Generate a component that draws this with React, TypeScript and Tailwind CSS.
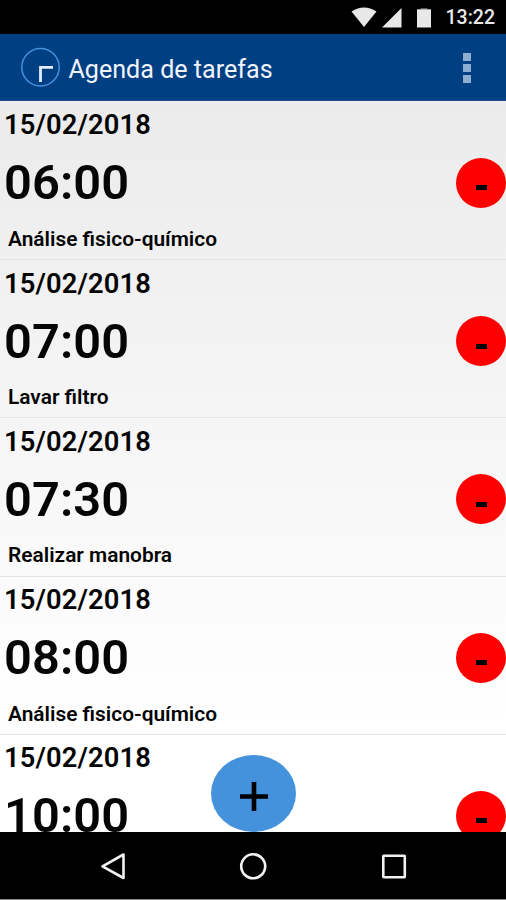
type Task = {
  date: string;
  time: string;
  title?: string;
};

const TASKS: Task[] = [
  { date: "15/02/2018", time: "06:00", title: "Análise fisico-químico" },
  { date: "15/02/2018", time: "07:00", title: "Lavar filtro" },
  { date: "15/02/2018", time: "07:30", title: "Realizar manobra" },
  { date: "15/02/2018", time: "08:00", title: "Análise fisico-químico" },
  { date: "15/02/2018", time: "10:00" },
];

function StatusBar() {
  return (
    <div className="flex h-[34px] shrink-0 items-center justify-end bg-black pr-[11px] text-[#e8e8e8]">
      <svg width="26" height="20" viewBox="0 0 26 20" fill="currentColor" aria-hidden>
        <path d="M0.5 4.5 Q13 -3.5 25.5 4.5 L13 20 Z" />
      </svg>
      <svg className="ml-[5px] mt-px" width="20" height="20" viewBox="0 0 20 20" fill="currentColor" aria-hidden>
        <path d="M0 19.5 L19.5 0 V19.5 Z" />
      </svg>
      <svg className="ml-[15px] mt-[2px]" width="14" height="20" viewBox="0 0 14 20" fill="currentColor" aria-hidden>
        <path d="M3.5 0 H10.5 V1.5 H3.5 Z" opacity="0.4" />
        <path d="M0 1.3 H14 V19.5 H0 Z" />
      </svg>
      <span className="ml-[15px] mt-[2px] text-[19.5px] font-medium leading-none">13:22</span>
    </div>
  );
}

function AppBar() {
  return (
    <header className="flex h-[67px] shrink-0 items-center border-b border-[#244a91] bg-[#003f82] pl-[21px] pr-[35px]">
      <svg width="40" height="40" viewBox="0 0 40 40" fill="none" aria-hidden>
        <circle cx="19.5" cy="20.3" r="18.7" stroke="#4590dc" strokeWidth="1.5" />
        <path d="M19.5 35 V20.3 H32" stroke="#e6edfa" strokeWidth="2.8" />
      </svg>
      <h1 className="ml-[7.5px] mt-[5px] text-[25.1px] leading-none text-[#f0f4fb]">Agenda de tarefas</h1>
      <div className="ml-auto mt-[2px] flex flex-col gap-[3px]">
        <span className="size-[8px] bg-[#8fadd3]" />
        <span className="size-[8px] bg-[#8fadd3]" />
        <span className="size-[8px] bg-[#8fadd3]" />
      </div>
    </header>
  );
}

function TaskRow({ task }: { task: Task }) {
  return (
    <li className="flex h-[158.3px] shrink-0 justify-between border-b border-[#e4e4e4] pl-[4px]">
      <div className="flex flex-col">
        <span className="mt-[7.5px] text-[27.3px] leading-[32px] tracking-[0.15px]">{task.date}</span>
        <span className="mt-[12px] text-[48.8px] leading-[60px] tracking-[0.1px]">{task.time}</span>
        {task.title && (
          <span className="ml-[4px] mt-[13.4px] text-[20.9px] leading-[24px]">{task.title}</span>
        )}
      </div>
      <button className="mt-[56px] flex h-[50px] w-[50px] items-center justify-center rounded-full bg-[#ff0000]" aria-label="Remover">
        <span className="mt-[10px] h-[5px] w-[11px] bg-black" />
      </button>
    </li>
  );
}

function NavBar() {
  return (
    <nav className="flex h-[68px] shrink-0 items-center border-b border-[#8a8a8a] bg-black pl-[100px]">
      <svg width="308" height="30" viewBox="0 0 308 30" fill="none" stroke="#f2f2f2" strokeWidth="2.6" strokeLinejoin="round" aria-hidden>
        <path d="M2.5 15.3 L23.5 3.5 V27 Z" />
        <circle cx="153.2" cy="15.3" r="12" />
        <rect x="283.3" y="4.7" width="21.5" height="21.5" rx="0.5" />
      </svg>
    </nav>
  );
}

export default function App() {
  return (
    <div className="flex h-[900px] w-[506px] flex-col overflow-hidden bg-black font-['Roboto',sans-serif]">
      <StatusBar />
      <AppBar />
      <main className="relative min-h-0 flex-1 overflow-hidden bg-gradient-to-b from-[#ebebeb] to-white to-85%">
        <ul className="flex flex-col pt-[0.8px] font-semibold text-[#050505]">
          {TASKS.map((task) => (
            <TaskRow key={task.time} task={task} />
          ))}
        </ul>
        <button className="absolute bottom-0 left-[211px] flex h-[77px] w-[85px] items-center justify-center rounded-[50%] bg-[#4592dc]" aria-label="Adicionar">
          <svg className="mt-[7px]" width="28" height="30" viewBox="0 0 28 30" stroke="#000" strokeWidth="4.6" aria-hidden>
            <path d="M0 14.5 H28 M14 0 V29" />
          </svg>
        </button>
      </main>
      <NavBar />
    </div>
  );
}
